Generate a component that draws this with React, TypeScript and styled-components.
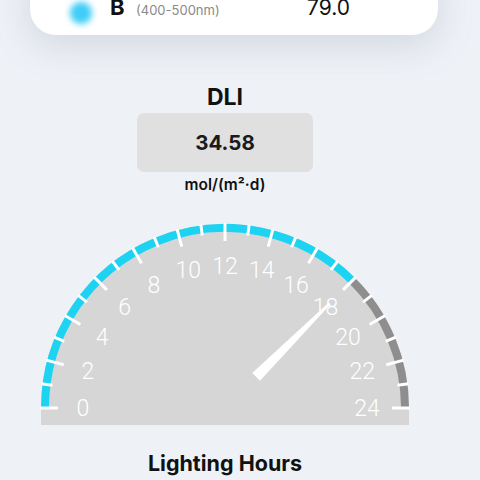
import styled, { createGlobalStyle } from "styled-components";

const GlobalStyle = createGlobalStyle`
  html, body {
    margin: 0;
    padding: 0;
    background: #eef1f6;
    font-family: Inter, "Noto Sans", sans-serif;
  }
`;

const Page = styled.div`
  width: 480px;
  height: 480px;
  overflow: hidden;
  background: #eef1f6;
`;

const SpectrumCard = styled.div`
  margin: -44px 42px 0 30px;
  height: 79px;
  box-sizing: border-box;
  padding: 40px 0 0 40px;
  background: #ffffff;
  border-radius: 26px;
  box-shadow: 0 10px 34px rgba(140, 150, 170, 0.28);
`;

const BandRow = styled.div`
  display: grid;
  grid-template-columns: 40px 26px 171px auto;
  align-items: baseline;
  height: 22px;
  line-height: 22px;
`;

const Glow = styled.div<{ color: string }>`
  align-self: start;
  margin-top: 6px;
  width: 22px;
  height: 22px;
  border-radius: 50%;
  background: ${({ color }) => color};
  filter: blur(3px);
`;

const BandLetter = styled.span`
  font-size: 22px;
  font-weight: 700;
  color: #111;
`;

const BandRange = styled.span`
  font-size: 13px;
  color: #8a8a8a;
`;

const BandValue = styled.span`
  font-size: 21px;
  color: #111;
`;

const Section = styled.div`
  width: 450px;
  display: flex;
  flex-direction: column;
  align-items: center;
`;

const Title = styled.div`
  margin-top: 48px;
  font-size: 23px;
  line-height: 28px;
  font-weight: 700;
  color: #111;
`;

const ValueBox = styled.div`
  margin-top: 2px;
  width: 176px;
  height: 59px;
  border-radius: 7px;
  background: #e0e0e0;
  display: flex;
  align-items: center;
  justify-content: center;
  font-size: 20.5px;
  font-weight: 700;
  color: #1a1a1a;
`;

const Unit = styled.div`
  margin-top: 3px;
  font-size: 15.5px;
  line-height: 20px;
  font-weight: 600;
  color: #111;
`;

const GaugeSvg = styled.svg`
  display: block;
  margin-top: 21px;
`;

const Caption = styled.div`
  margin-top: 20px;
  font-size: 21.5px;
  line-height: 26px;
  font-weight: 700;
  color: #111;
`;

const CX = 225;
const CY = 192;
const MAX = 24;

const polar = (value: number, r: number) => {
  const a = Math.PI - (value / MAX) * Math.PI;
  return { x: CX + r * Math.cos(a), y: CY - r * Math.sin(a) };
};

function Gauge({ value, limit }: { value: number; limit: number }) {
  const arcStart = polar(0, 180);
  const arcMid = polar(limit, 180);
  const arcEnd = polar(MAX, 180);
  const hours = Array.from({ length: MAX + 1 }, (_, i) => i);

  const a = Math.PI - (value / MAX) * Math.PI;
  const ux = Math.cos(a);
  const uy = -Math.sin(a);
  const nx = -uy;
  const ny = ux;
  const base = { x: CX + ux * 44, y: CY + uy * 44 };
  const tip = { x: CX + ux * 148, y: CY + uy * 148 };
  const needle = [
    [base.x + nx * 5.5, base.y + ny * 5.5],
    [tip.x + nx * 1.2, tip.y + ny * 1.2],
    [tip.x - nx * 1.2, tip.y - ny * 1.2],
    [base.x - nx * 5.5, base.y - ny * 5.5],
  ]
    .map((p) => p.join(","))
    .join(" ");

  return (
    <GaugeSvg width="450" height="214" viewBox="0 0 450 214">
      <path d="M 41 192 A 184 184 0 0 1 409 192 L 409 209 L 41 209 Z" fill="#d6d6d6" />
      <path
        d={`M ${arcStart.x} ${arcStart.y} A 180 180 0 0 1 ${arcMid.x} ${arcMid.y}`}
        fill="none"
        stroke="#1dd3f2"
        strokeWidth="8"
      />
      <path
        d={`M ${arcMid.x} ${arcMid.y} A 180 180 0 0 1 ${arcEnd.x} ${arcEnd.y}`}
        fill="none"
        stroke="#8e8e8e"
        strokeWidth="8"
      />
      {hours.map((h) => {
        const outer = polar(h, 185);
        const inner = polar(h, h % 2 === 0 ? 167 : 174);
        return (
          <line
            key={h}
            x1={outer.x}
            y1={outer.y}
            x2={inner.x}
            y2={inner.y}
            stroke="#ffffff"
            strokeWidth="3"
          />
        );
      })}
      {hours
        .filter((h) => h % 2 === 0)
        .map((h) => {
          const p = polar(h, 142);
          return (
            <text
              key={h}
              x={p.x}
              y={p.y}
              textAnchor="middle"
              dominantBaseline="central"
              fill="#ffffff"
              fontFamily="Roboto, 'Liberation Sans', sans-serif"
              fontWeight={300}
              fontSize="23"
            >
              {h}
            </text>
          );
        })}
      <polygon points={needle} fill="#ffffff" strokeLinejoin="round" />
    </GaugeSvg>
  );
}

export default function App() {
  return (
    <Page>
      <GlobalStyle />
      <SpectrumCard>
        <BandRow>
          <Glow color="#3fcdf7" />
          <BandLetter>B</BandLetter>
          <BandRange>(400-500nm)</BandRange>
          <BandValue>79.0</BandValue>
        </BandRow>
      </SpectrumCard>
      <Section>
        <Title>DLI</Title>
        <ValueBox>34.58</ValueBox>
        <Unit>mol/(m²·d)</Unit>
        <Gauge value={18} limit={18} />
        <Caption>Lighting Hours</Caption>
      </Section>
    </Page>
  );
}
